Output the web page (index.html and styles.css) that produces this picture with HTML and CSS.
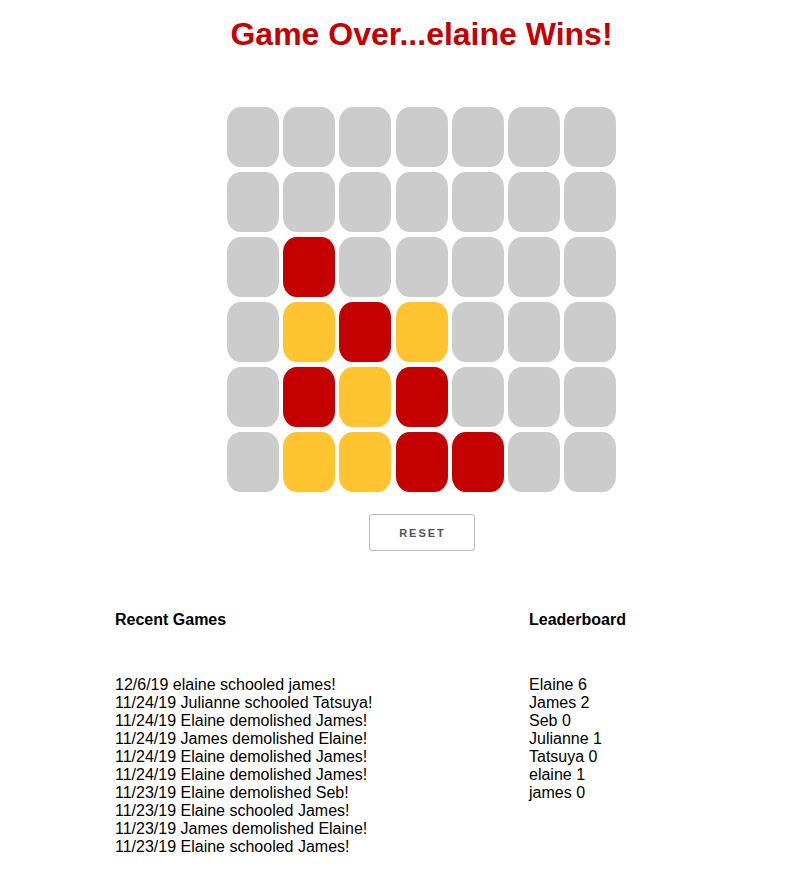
FILE: index.html
```html
<!DOCTYPE html>
<html>
<head>
<meta charset="utf-8">
<link rel="stylesheet" href="styles.css">
</head>
<body>
<div class="page">
  <h1 class="title">Game Over...elaine Wins!</h1>
  <div class="board">
    <div class="cell"></div><div class="cell"></div><div class="cell"></div><div class="cell"></div><div class="cell"></div><div class="cell"></div><div class="cell"></div>
    <div class="cell"></div><div class="cell"></div><div class="cell"></div><div class="cell"></div><div class="cell"></div><div class="cell"></div><div class="cell"></div>
    <div class="cell"></div><div class="cell red"></div><div class="cell"></div><div class="cell"></div><div class="cell"></div><div class="cell"></div><div class="cell"></div>
    <div class="cell"></div><div class="cell yellow"></div><div class="cell red"></div><div class="cell yellow"></div><div class="cell"></div><div class="cell"></div><div class="cell"></div>
    <div class="cell"></div><div class="cell red"></div><div class="cell yellow"></div><div class="cell red"></div><div class="cell"></div><div class="cell"></div><div class="cell"></div>
    <div class="cell"></div><div class="cell yellow"></div><div class="cell yellow"></div><div class="cell red"></div><div class="cell red"></div><div class="cell"></div><div class="cell"></div>
  </div>
  <div class="actions"><button class="reset">RESET</button></div>
</div>
<div class="stats">
  <div class="col recent">
    <h3 class="heading">Recent Games</h3>
    <ul class="list">
      <li>12/6/19 elaine schooled james!</li>
      <li>11/24/19 Julianne schooled Tatsuya!</li>
      <li>11/24/19 Elaine demolished James!</li>
      <li>11/24/19 James demolished Elaine!</li>
      <li>11/24/19 Elaine demolished James!</li>
      <li>11/24/19 Elaine demolished James!</li>
      <li>11/23/19 Elaine demolished Seb!</li>
      <li>11/23/19 Elaine schooled James!</li>
      <li>11/23/19 James demolished Elaine!</li>
      <li>11/23/19 Elaine schooled James!</li>
    </ul>
  </div>
  <div class="col leaders">
    <h3 class="heading">Leaderboard</h3>
    <ul class="list">
      <li>Elaine 6</li>
      <li>James 2</li>
      <li>Seb 0</li>
      <li>Julianne 1</li>
      <li>Tatsuya 0</li>
      <li>elaine 1</li>
      <li>james 0</li>
    </ul>
  </div>
</div>
</body>
</html>
```
FILE: styles.css
```css
html, body {
  margin: 0;
  padding: 0;
  background: #fff;
  font-family: "Liberation Sans", Arial, Helvetica, sans-serif;
  color: #000;
}
.page {
  padding-left: 40px;
  display: flex;
  flex-direction: column;
  align-items: center;
}
.title {
  margin: 14px 0 0 0;
  font-size: 32px;
  line-height: 40px;
  font-weight: bold;
  color: #c50000;
}
.board {
  margin-top: 53px;
  display: grid;
  grid-template-columns: repeat(7, 52px);
  grid-auto-rows: 60px;
  column-gap: 4.33px;
  row-gap: 5px;
}
.cell {
  background: #cccccc;
  border-radius: 26%;
}
.cell.red { background: #c50000; }
.cell.yellow { background: #ffc42f; }
.actions {
  margin-top: 22px;
}
.reset {
  width: 106px;
  height: 37px;
  background: #fff;
  border: 1px solid #bbb;
  border-radius: 3px;
  font-family: "Liberation Sans", Arial, sans-serif;
  font-weight: bold;
  font-size: 11px;
  letter-spacing: 2px;
  color: #555;
  padding: 0 0 0 2px;
}
.stats {
  display: flex;
  margin-top: 59px;
  padding-left: 115px;
}
.col.recent { width: 414px; }
.heading {
  margin: 0;
  font-size: 16px;
  line-height: 20px;
  font-weight: bold;
}
.list {
  list-style: none;
  margin: 46px 0 0 0;
  padding: 0;
  font-size: 16px;
  line-height: 18px;
}
```
